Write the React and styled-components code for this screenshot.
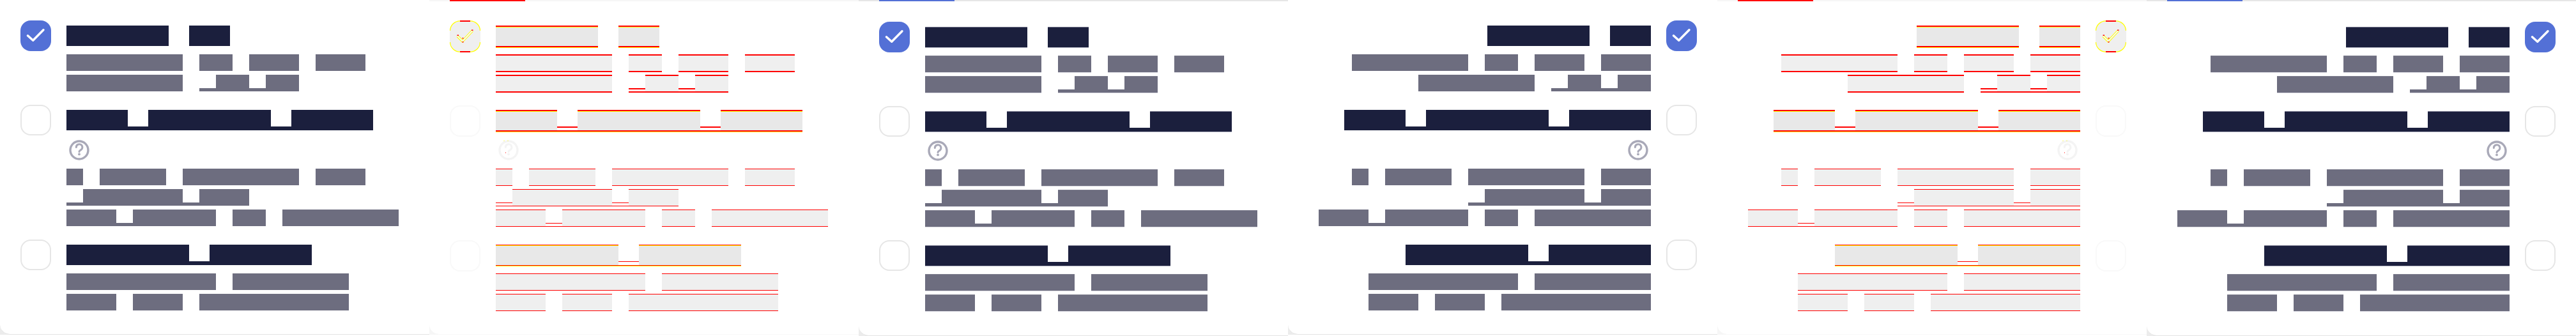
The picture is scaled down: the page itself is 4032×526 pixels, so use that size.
import React from "react";
import styled, { createGlobalStyle, css } from "styled-components";

const NAVY = "#1b1f3d";
const SLATE = "#6d6d7f";
const BLUE = "#5370d6";
const RED = "#ff0000";
const YELLOW = "#ffff00";

const TITLE = 32;
const BODY = 26;

const Global = createGlobalStyle`
	html, body {
		margin: 0;
		background: #ffffff;
	}
	* {
		box-sizing: border-box;
	}
`;

const Page = styled.div`
	display: flex;
	width: 4032px;
	height: 526px;
	overflow: hidden;
`;

const Panel = styled.section`
	flex: none;
	display: flex;
	flex-direction: column;
	width: 672px;
	height: 526px;
	background: linear-gradient(
			${(p) => (p.$mode === "diff" ? "#f6f6f6" : "#ececec")},
			${(p) => (p.$mode === "diff" ? "#f6f6f6" : "#ececec")}
		)
		no-repeat left 0 bottom ${(p) => (p.$mode === "soft" ? "0" : "2px")} / 16px 16px;
`;

const TopBar = styled.div`
	flex: none;
	height: 2px;
	padding-left: 32px;
	background: ${(p) => (p.$mode === "diff" ? "#f6f6f6" : "#e6e6e6")};
`;

const TopFill = styled.div`
	width: 118px;
	height: 2px;
	background: ${(p) => (p.$mode === "diff" ? RED : BLUE)};
`;

const Card = styled.div`
	display: flex;
	flex-direction: column;
	gap: 18px;
	height: ${(p) => (p.$mode === "diff" ? "522px" : "524px")};
	padding: ${(p) => (p.$mode === "diff" ? "30px" : "32px")} 32px 0;
	background: #ffffff;
	border-bottom: 1px solid ${(p) => (p.$mode === "diff" ? "#f8f8f8" : "#e4e4e4")};
	border-bottom-left-radius: 16px;
`;

const Row = styled.div`
	display: flex;
	flex-direction: ${(p) => (p.$rtl ? "row-reverse" : "row")};
	gap: 24px;
`;

const Content = styled.div`
	flex: 1;
	min-width: 0;
	display: flex;
	flex-direction: column;
`;

const Box = styled.div`
	flex: none;
	width: 48px;
	height: 48px;
	border-radius: 16px;
	display: flex;
	align-items: center;
	justify-content: center;
	background: ${(p) => (p.$checked ? BLUE : "#ffffff")};
	border: ${(p) => (p.$checked ? "none" : `2px solid ${p.$mode === "diff" ? "#f9f9f9" : "#e6e6e6"}`)};
	${(p) =>
		p.$mode === "diff" &&
		!p.$checked &&
		css`
			height: 49px;
			margin-top: 1px;
		`}
`;

const DiffBox = styled.svg`
	flex: none;
	display: block;
	width: 48px;
	height: 50px;
`;

const Line = styled.div`
	flex: none;
	display: flex;
	align-items: flex-start;
	justify-content: ${(p) => (p.$rtl ? "flex-end" : "flex-start")};
	height: ${(p) => p.$size}px;
	margin: ${(p) => (p.$size === TITLE ? "8px 0 10px" : "3px 0")};
`;

const wordLook = ({ $size, $mode, $weight }) => {
	const isTitle = $size === TITLE;
	if ($mode === "diff") {
		return css`
			height: ${$size + $weight}px;
			background: ${isTitle ? "#e8e8e8" : "#efefef"};
			border-top: ${$weight}px solid ${RED};
			border-bottom: ${$weight}px solid ${RED};
			${isTitle &&
			css`
				box-shadow:
					inset 0 1px 0 ${YELLOW},
					0 1px 0 ${YELLOW};
			`}
		`;
	}
	if ($mode === "soft") {
		return css`
			height: ${$size + 1}px;
			background: ${isTitle ? NAVY : SLATE};
			border-top: 1px solid ${isTitle ? "#75768c" : "#7c7c8c"};
			border-bottom: 1px solid ${isTitle ? "#b3b4c2" : "#dbdbe2"};
		`;
	}
	return css`
		height: ${$size}px;
		background: ${isTitle ? NAVY : SLATE};
	`;
};

const Word = styled.span`
	flex: none;
	width: ${(p) => p.$units * p.$size}px;
	${wordLook}
`;

const Gap = styled.span`
	flex: none;
	width: ${(p) => p.$size}px;
`;

// the low strip that joins two words across a space
const Strip = styled.span`
	flex: none;
	width: ${(p) => p.$size}px;
	${({ $size, $mode, $weight }) => {
		const isTitle = $size === TITLE;
		const low = isTitle ? 6 : 5;
		const top = $size - low;
		if ($mode === "diff") {
			return css`
				margin-top: ${top}px;
				height: ${low + $weight}px;
				border-top: ${$weight}px solid ${RED};
				border-bottom: ${$weight}px solid ${RED};
				${isTitle &&
				css`
					box-shadow: 0 1px 0 ${YELLOW};
				`}
			`;
		}
		if ($mode === "soft") {
			return css`
				margin-top: ${top}px;
				height: ${low + 1}px;
				background: ${isTitle ? NAVY : SLATE};
				border-bottom: 1px solid ${isTitle ? "#b3b4c2" : "#dbdbe2"};
			`;
		}
		return css`
			margin-top: ${top}px;
			height: ${low}px;
			background: ${isTitle ? NAVY : SLATE};
		`;
	}}
`;

const HelpRow = styled.div`
	flex: none;
	display: flex;
	justify-content: ${(p) => (p.$rtl ? "flex-end" : "flex-start")};
	height: 46px;
	margin-top: ${(p) => (p.$mode === "soft" ? "0" : "1px")};
`;

const HelpIcon = styled.svg`
	display: block;
	width: 40px;
	height: 40px;
`;

const ROWS = [
	{
		title: "5 . 2",
		titleWeight: 2,
		bodyWeight: 2,
		body: ["7 . 2 . 3 . 3", "7 . ~ 2 ~ 2"],
	},
	{
		title: "3 ~ 6 ~ 4",
		titleWeight: 2,
		bodyWeight: 1,
		help: true,
		body: ["1 . 4 . 7 . 3", "~ 6 ~ 3", "3 ~ 5 . 2 . 7"],
	},
	{
		title: "6 ~ 5",
		titleWeight: 1,
		bodyWeight: 1,
		body: ["9 . 7", "3 . 3 . 9"],
	},
];

const Check = () => (
	<svg width="48" height="48" viewBox="0 0 48 48" fill="none">
		<path
			d="M11.4 23.8 L19.7 31.3 L36 14.7"
			stroke="#ffffff"
			strokeWidth="3.4"
			strokeLinecap="round"
			strokeLinejoin="round"
		/>
	</svg>
);

const DiffCheck = () => (
	<DiffBox viewBox="0 0 48 50" fill="none">
		<rect x="0" y="1" width="48" height="48" rx="16" fill="#efefef" />
		<path
			d="M0.5 34 A15.5 15.5 0 0 0 16 49.2 M32 49.2 A15.5 15.5 0 0 0 47.5 34 M0.5 16 A15.5 15.5 0 0 1 16 0.8 M32 0.8 A15.5 15.5 0 0 1 47.5 16"
			stroke={YELLOW}
			strokeWidth="1.2"
		/>
		<rect x="16" y="0" width="16" height="2" fill={RED} />
		<rect x="16" y="48" width="16" height="2" fill={RED} />
		<path d="M12 24.5 L20 32.5 L35.5 16" stroke={YELLOW} strokeWidth="4" strokeLinejoin="round" />
		<path d="M12 24.5 L20 32.5 L35.5 16" stroke="#f6f6f6" strokeWidth="2" strokeLinejoin="round" />
		<rect x="11.5" y="22.5" width="2.5" height="1.5" fill={RED} />
		<rect x="19.5" y="27" width="2" height="1.5" fill={RED} />
		<rect x="34" y="14.5" width="2.5" height="1.5" fill={RED} />
		<rect x="19.5" y="33" width="2" height="1.5" fill={RED} />
	</DiffBox>
);

const Help = ({ mode }) => {
	const color = mode === "diff" ? "#f4f4f4" : "#a9a9b8";
	return (
		<HelpIcon viewBox="0 0 40 40" fill="none">
			<circle cx="20" cy="20" r="14" stroke={color} strokeWidth="3.4" />
			<path
				d="M15.3 15.6 A4.8 4.8 0 1 1 22.6 19.6 C21 20.6 20 21 20 22.4"
				stroke={color}
				strokeWidth="3"
				strokeLinecap="round"
			/>
			<circle cx="20" cy="26.4" r="1.9" fill={color} />
			{mode === "diff" && (
				<>
					<rect x="12.5" y="5" width="1" height="1" fill={YELLOW} />
					<rect x="18.5" y="5" width="1" height="1" fill={YELLOW} />
					<rect x="15" y="23.5" width="1" height="1" fill={RED} />
				</>
			)}
		</HelpIcon>
	);
};

const TextLine = ({ spec, size, mode, weight, rtl }) => (
	<Line $size={size} $rtl={rtl}>
		{spec.split(" ").map((token, i) => {
			if (token === ".") return <Gap key={i} $size={size} />;
			if (token === "~") return <Strip key={i} $size={size} $mode={mode} $weight={weight} />;
			return <Word key={i} $units={Number(token)} $size={size} $mode={mode} $weight={weight} />;
		})}
	</Line>
);

const Option = ({ row, checked, mode, rtl }) => (
	<Row $rtl={rtl}>
		{checked && mode === "diff" ? (
			<DiffCheck />
		) : (
			<Box $checked={checked} $mode={mode}>
				{checked && <Check />}
			</Box>
		)}
		<Content>
			<TextLine spec={row.title} size={TITLE} mode={mode} weight={row.titleWeight} rtl={rtl} />
			{row.help && (
				<HelpRow $rtl={rtl} $mode={mode}>
					<Help mode={mode} />
				</HelpRow>
			)}
			{row.body.map((spec) => (
				<TextLine key={spec} spec={spec} size={BODY} mode={mode} weight={row.bodyWeight} rtl={rtl} />
			))}
		</Content>
	</Row>
);

const OptionPanel = ({ mode, rtl }) => (
	<Panel $mode={mode}>
		{mode !== "plain" && (
			<TopBar $mode={mode}>
				<TopFill $mode={mode} />
			</TopBar>
		)}
		<Card $mode={mode}>
			{ROWS.map((row, i) => (
				<Option key={row.title} row={row} checked={i === 0} mode={mode} rtl={rtl} />
			))}
		</Card>
	</Panel>
);

export default function App() {
	return (
		<>
			<Global />
			<Page>
				<OptionPanel mode="plain" />
				<OptionPanel mode="diff" />
				<OptionPanel mode="soft" />
				<OptionPanel mode="plain" rtl />
				<OptionPanel mode="diff" rtl />
				<OptionPanel mode="soft" rtl />
			</Page>
		</>
	);
}
